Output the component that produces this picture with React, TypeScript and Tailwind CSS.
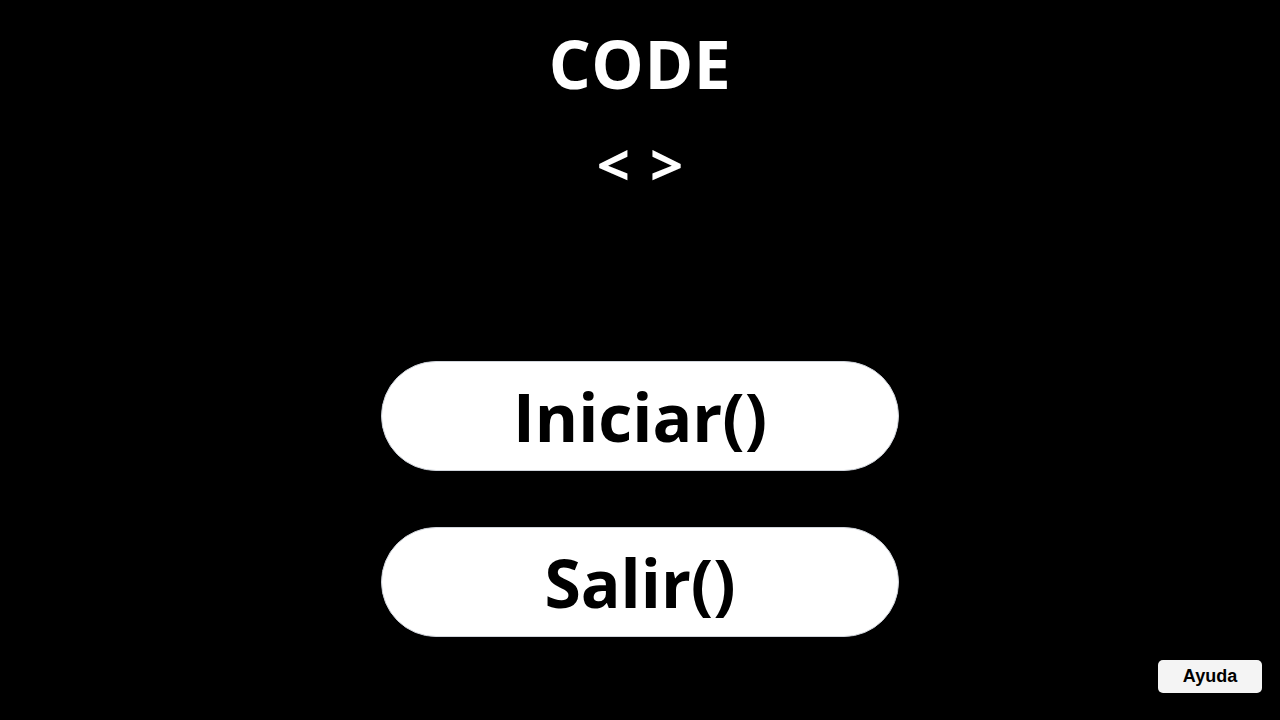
export default function App() {
  return (
    <div className="relative flex min-h-screen flex-col items-center bg-black font-['Open_Sans',sans-serif] text-white">
      <h1 className="mt-[30px] text-[66px] font-bold leading-none tracking-[0.5px]">CODE</h1>
      <div className="mt-[39px] flex gap-[20px] text-[58px] font-bold leading-none">
        <span>&lt;</span>
        <span>&gt;</span>
      </div>

      <div className="mt-[168px] flex flex-col gap-[56px]">
        <button className="flex h-[110px] w-[518px] items-center justify-center rounded-full border border-gray-300 bg-white text-[66px] font-bold text-black">
          Iniciar()
        </button>
        <button className="flex h-[110px] w-[518px] items-center justify-center rounded-full border border-gray-300 bg-white text-[66px] font-bold text-black">
          Salir()
        </button>
      </div>

      <button className="absolute bottom-[27px] right-[18px] h-[33px] w-[104px] rounded-[5px] bg-[#f4f4f4] font-['Liberation_Sans',sans-serif] text-[18px] font-bold text-black">
        Ayuda
      </button>
    </div>
  );
}
